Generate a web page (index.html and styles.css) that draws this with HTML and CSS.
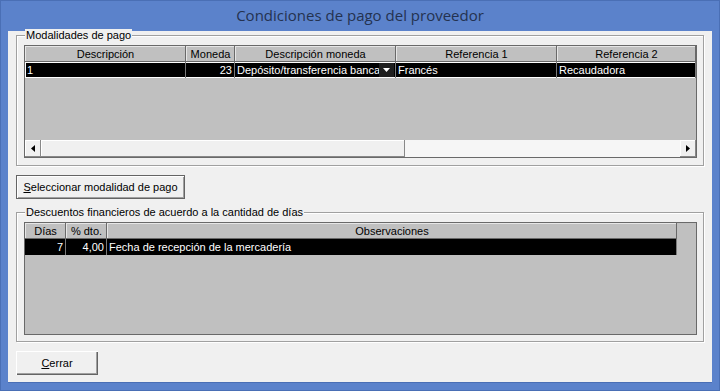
FILE: index.html
```html
<!DOCTYPE html>
<html lang="es">
<head>
    <meta charset="UTF-8">
    <title>Condiciones de pago del proveedor</title>
    <link rel="stylesheet" href="styles.css">
</head>
<body>

<div class="window">
    <!-- Title bar -->
    <div class="titlebar">Condiciones de pago del proveedor</div>

    <div class="client">
        <!-- Modalidades de pago -->
        <fieldset class="group group-modalidades">
            <legend>Modalidades de pago</legend>
            <div class="grid grid-modalidades">
                <div class="grid-head">
                    <div class="hcell">Descripción</div>
                    <div class="hcell">Moneda</div>
                    <div class="hcell">Descripción moneda</div>
                    <div class="hcell">Referencia 1</div>
                    <div class="hcell">Referencia 2</div>
                </div>
                <div class="grid-row selected">
                    <div class="cell">1</div>
                    <div class="cell num">23</div>
                    <div class="cell combo">
                        <span class="combo-text">Depósito/transferencia banca</span>
                        <span class="combo-btn"><svg width="7" height="4" viewBox="0 0 7 4"><path d="M0 0h7L3.5 4z" fill="#fff"/></svg></span>
                    </div>
                    <div class="cell">Francés</div>
                    <div class="cell">Recaudadora</div>
                </div>
                <div class="grid-empty"></div>
                <div class="hscroll">
                    <div class="sb-btn"><svg width="4" height="7" viewBox="0 0 4 7"><path d="M4 0v7L0 3.5z" fill="#000"/></svg></div>
                    <div class="sb-thumb"></div>
                    <div class="sb-track"></div>
                    <div class="sb-btn"><svg width="4" height="7" viewBox="0 0 4 7"><path d="M0 0v7L4 3.5z" fill="#000"/></svg></div>
                </div>
            </div>
        </fieldset>

        <button class="btn btn-default"><u>S</u>eleccionar modalidad de pago</button>

        <!-- Descuentos financieros -->
        <fieldset class="group group-descuentos">
            <legend>Descuentos financieros de acuerdo a la cantidad de días</legend>
            <div class="grid grid-descuentos">
                <div class="grid-head">
                    <div class="hcell">Días</div>
                    <div class="hcell">% dto.</div>
                    <div class="hcell">Observaciones</div>
                </div>
                <div class="grid-row selected">
                    <div class="cell num">7</div>
                    <div class="cell num">4,00</div>
                    <div class="cell">Fecha de recepción de la mercadería</div>
                </div>
            </div>
        </fieldset>

        <button class="btn btn-close"><u>C</u>errar</button>
    </div>
</div>

</body>
</html>
```

FILE: styles.css
```css
body {
    margin: 0;
    padding: 0;
    background-color: #5b82cb;
    font-family: 'Liberation Sans', Arial, sans-serif;
    font-size: 11px;
    color: #000;
}

/* Window frame */
.window {
    width: 720px;
    height: 391px;
    box-sizing: border-box;
    border: 1px solid #4a6fb5;
    display: flex;
    flex-direction: column;
}

.titlebar {
    height: 29px;
    line-height: 29px;
    text-align: center;
    font-family: 'Open Sans', 'Noto Sans', sans-serif;
    font-size: 15px;
    color: #243250;
}

.client {
    margin: 1px 7px 0 7px;
    height: 351px;
    background-color: #f0f0f0;
    padding: 0 8px;
    box-sizing: border-box;
    display: flex;
    flex-direction: column;
    align-items: flex-start;
    box-shadow: 0 1px 0 #4a6fb5;
}

/* Group boxes (etched border) */
.group {
    margin: 0;
    padding: 3px 6px 0 7px;
    border: 1px solid #a0a0a0;
    box-shadow: inset 1px 1px 0 #fff, 1px 1px 0 #fff;
    width: 688px;
    box-sizing: border-box;
}

.group legend {
    padding: 0 1px;
    margin-left: 1px;
    line-height: 13px;
    font-size: 11px;
    background-color: #f0f0f0;
}

.group-modalidades {
    margin-top: -2px;
    height: 137px;
}

.group-descuentos {
    margin-top: 7px;
    height: 136px;
}

/* Grids */
.grid {
    width: 673px;
    box-sizing: border-box;
    border: 1px solid #696969;
    background-color: #c0c0c0;
    display: flex;
    flex-direction: column;
}

.grid-modalidades {
    height: 113px;
}

.grid-descuentos {
    height: 113px;
}

.grid-head,
.grid-row {
    display: grid;
    height: 16px;
}

.grid-modalidades .grid-head,
.grid-modalidades .grid-row {
    grid-template-columns: 161px 49px 161px 161px 139px;
}

.grid-descuentos .grid-head,
.grid-descuentos .grid-row {
    grid-template-columns: 41px 41px 570px;
}

.grid-descuentos .grid-head {
    width: 652px;
}

.hcell {
    text-align: center;
    line-height: 16px;
    white-space: nowrap;
    overflow: hidden;
    box-shadow: inset -1px -1px 0 #696969, inset 1px 1px 0 #e6e6e6;
}

.grid-row.selected {
    background-color: #000;
    color: #fff;
    box-shadow: inset 0 1px 0 #fff, inset 0 -1px 0 #fff, inset 1px 0 0 #fff;
}

.grid-descuentos .grid-row.selected {
    width: 652px;
    box-shadow: none;
}

.cell {
    line-height: 16px;
    padding: 0 2px;
    white-space: nowrap;
    overflow: hidden;
    border-right: 1px solid #7a7a7a;
}

.cell.num {
    text-align: right;
}

.cell.combo {
    display: flex;
    justify-content: space-between;
    padding-right: 1px;
}

.combo-text {
    overflow: hidden;
}

.combo-btn {
    flex: none;
    width: 15px;
    height: 14px;
    margin-top: 1px;
    background-color: #1e1e1e;
    display: flex;
    align-items: center;
    justify-content: center;
}

.grid-empty {
    flex: 1;
}

/* Horizontal scrollbar */
.hscroll {
    height: 17px;
    display: flex;
    background-color: #f0f0f0;
}

.sb-btn {
    width: 16px;
    background-color: #f0f0f0;
    display: flex;
    align-items: center;
    justify-content: center;
    box-shadow: inset -1px -1px 0 #888, inset 1px 1px 0 #fff;
}

.sb-thumb {
    width: 364px;
    background-color: #f0f0f0;
    box-shadow: inset -1px -1px 0 #888, inset 1px 1px 0 #fff;
}

.sb-track {
    flex: 1;
    background-color: #f6f6f6;
}

/* Buttons */
.btn {
    font-family: 'Liberation Sans', Arial, sans-serif;
    font-size: 11px;
    color: #000;
    background-color: #f0f0f0;
    height: 24px;
    padding: 0;
    box-sizing: border-box;
    border: none;
    white-space: nowrap;
}

.btn-default {
    margin-top: 9px;
    width: 169px;
    border: 1px solid #646464;
    box-shadow: inset 1px 1px 0 #fff, inset -1px -1px 0 #a0a0a0;
}

.btn-close {
    margin-top: 9px;
    width: 82px;
    box-shadow: inset 1px 1px 0 #fff, inset -1px -1px 0 #646464, inset -2px -2px 0 #a0a0a0;
}
```
